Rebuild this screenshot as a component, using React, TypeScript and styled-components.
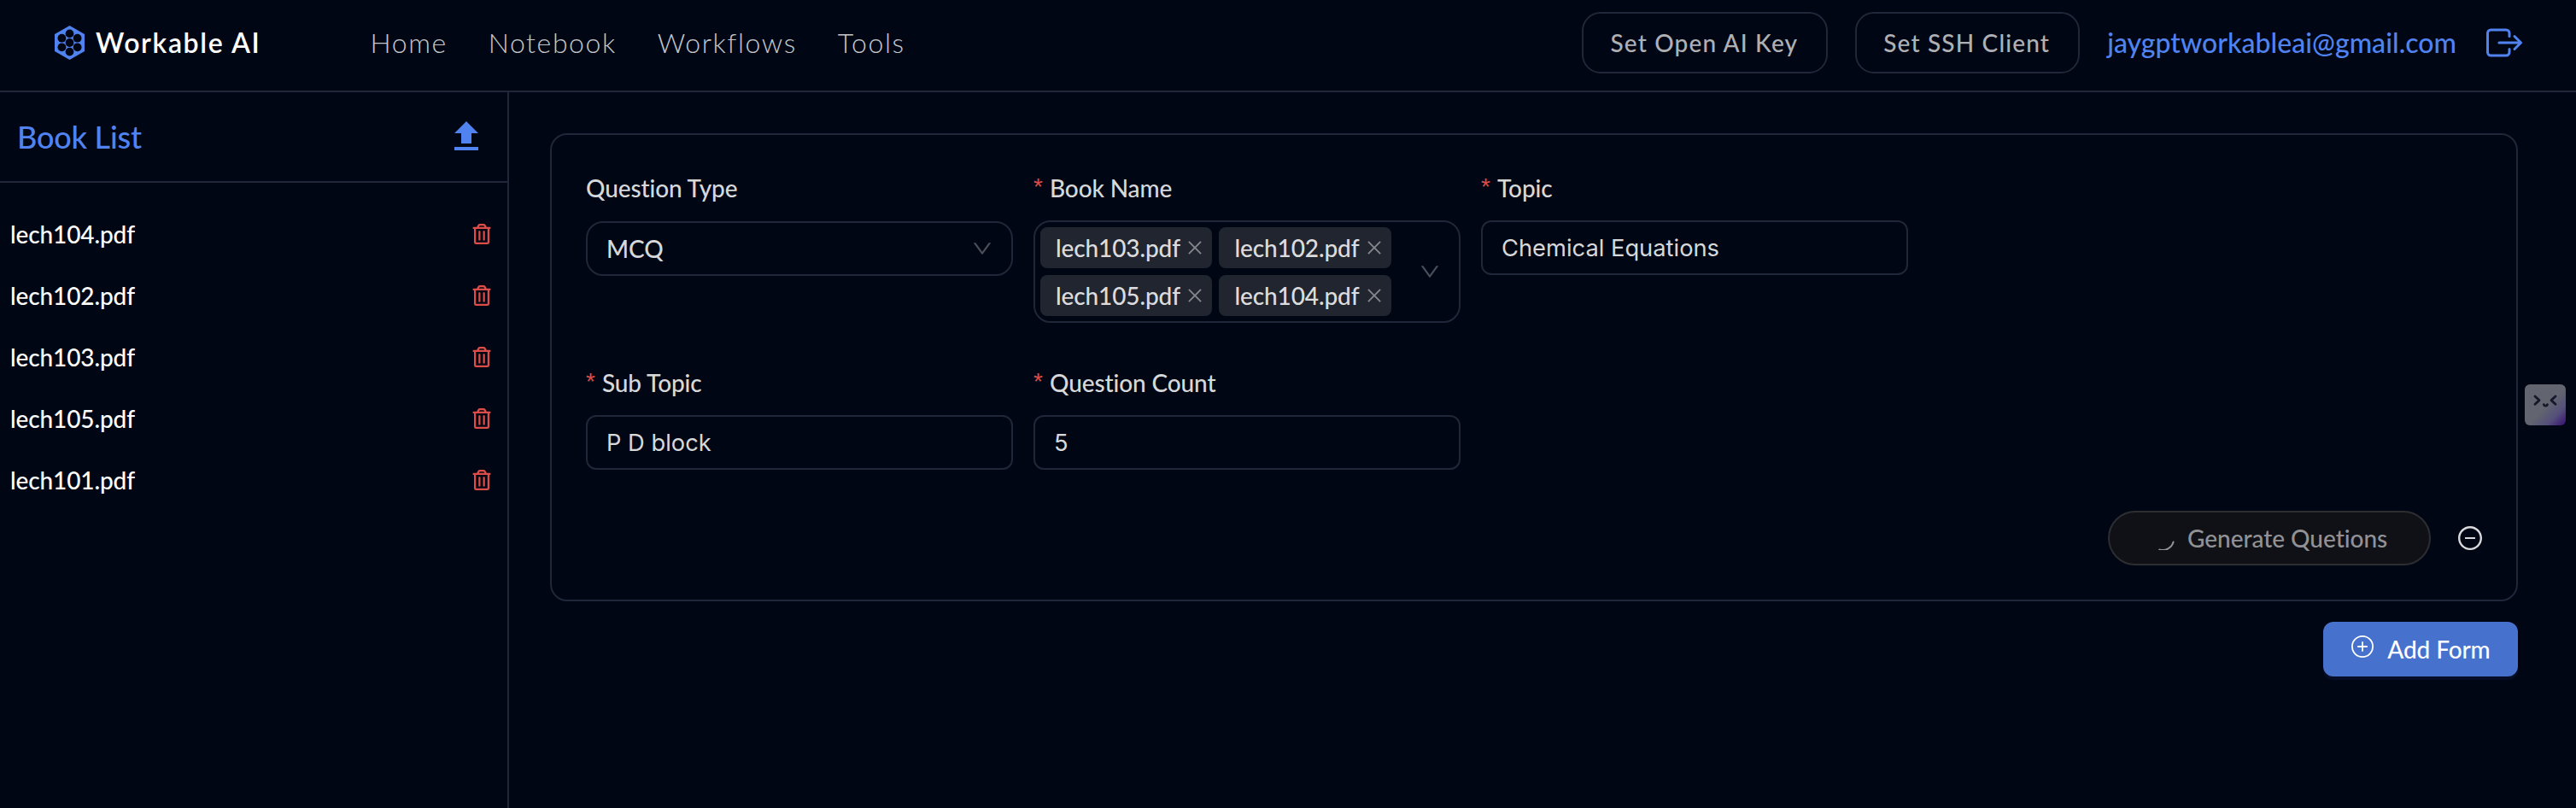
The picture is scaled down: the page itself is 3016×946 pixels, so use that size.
import React from "react";
import styled, { createGlobalStyle } from "styled-components";
import { AiOutlineClose, AiOutlineDown, AiOutlineMinusCircle } from "react-icons/ai";
import { FaRegTrashAlt } from "react-icons/fa";
import { IoExitOutline } from "react-icons/io5";
import { MdUpload } from "react-icons/md";

const color = {
  bg: "#010614",
  border: "#1f2738",
  accent: "#5083f0",
  danger: "#dc4c48",
  text: "rgba(255, 255, 255, 0.85)",
  muted: "#aeb0b4",
};

const GlobalStyle = createGlobalStyle`
  *, *::before, *::after { box-sizing: border-box; }
  body {
    margin: 0;
    background: ${color.bg};
    color: ${color.text};
    font-family: Lato, "Liberation Sans", sans-serif;
    font-size: 28px;
    font-weight: 500;
    font-variant-ligatures: none;
    letter-spacing: -0.12px;
    line-height: 44px;
  }
  button { font: inherit; font-variant-ligatures: none; letter-spacing: inherit; color: inherit; background: none; border: 0; padding: 0; margin: 0; }
  svg { display: block; flex: none; }
`;

const Page = styled.div`
  position: relative;
  display: flex;
  flex-direction: column;
  height: 946px;
  overflow: hidden;
`;

const Header = styled.header`
  display: flex;
  align-items: flex-start;
  height: 108px;
  padding: 14px 60px 0 64px;
  border-bottom: 2px solid ${color.border};
`;

const Brand = styled.div`
  display: flex;
  align-items: center;
  gap: 13px;
  width: 369.5px;
  height: 72px;
  font-size: 32px;
  font-weight: 600;
  letter-spacing: 1.65px;
  color: #fff;
`;

const Nav = styled.nav`
  display: flex;
  align-items: center;
  gap: 47.8px;
  height: 72px;
  font-size: 32px;
  font-weight: 300;
  letter-spacing: 1.6px;
  color: #c4c6c9;
`;

const Account = styled.div`
  display: flex;
  align-items: center;
  gap: 32px;
  height: 72px;
  margin-left: auto;
  color: ${color.accent};
`;

const KeyButton = styled.button`
  height: 72px;
  padding: 0 33px 0 31px;
  border: 2px solid ${color.border};
  border-radius: 22px;
  letter-spacing: 1.16px;
  color: ${color.muted};
`;

const Email = styled.span`
  font-size: 32px;
  letter-spacing: 0.03px;
`;

const Body = styled.div`
  display: flex;
  flex: 1;
`;

const Sidebar = styled.aside`
  width: 596px;
  border-right: 2px solid ${color.border};
`;

const SidebarHeader = styled.div`
  display: flex;
  align-items: center;
  justify-content: space-between;
  height: 106px;
  padding: 0 24px 0 20px;
  border-bottom: 2px solid ${color.border};
  font-size: 36px;
  letter-spacing: -0.22px;
  color: ${color.accent};
`;

const BookList = styled.ul`
  list-style: none;
  margin: 0;
  padding: 24px 0;
`;

const BookRow = styled.li`
  display: flex;
  align-items: center;
  justify-content: space-between;
  height: 72px;
  padding: 0 18px 0 12px;
  color: #fff;

  svg { color: ${color.danger}; }
`;

const Main = styled.main`
  display: flex;
  flex: 1;
  flex-direction: column;
  align-items: flex-end;
  gap: 24px;
  padding: 48px 68px 0 48px;
`;

const Card = styled.section`
  width: 100%;
  padding: 40px;
  border: 2px solid ${color.border};
  border-radius: 20px;
`;

const Fields = styled.div`
  display: grid;
  grid-template-columns: repeat(3, 500px);
  column-gap: 24px;
  row-gap: 48px;
  align-items: start;
`;

const Field = styled.div`
  display: flex;
  flex-direction: column;
  gap: 16px;
`;

const Label = styled.div`
  display: flex;
  height: 44px;
`;

const Required = styled.span`
  width: 19px;
  font-family: "Liberation Sans", sans-serif;
  line-height: 42px;
  color: ${color.danger};
`;

const Input = styled.div`
  height: 64px;
  padding: 0 22px;
  border: 2px solid ${color.border};
  border-radius: 12px;
  font-family: Inter, "Liberation Sans", sans-serif;
  font-size: 27.3px;
  font-weight: 400;
  letter-spacing: 0;
  line-height: 61px;
`;

const Select = styled.div<{ $multiple?: boolean }>`
  display: flex;
  align-items: center;
  justify-content: space-between;
  height: ${(p) => (p.$multiple ? "120px" : "64px")};
  margin-top: ${(p) => (p.$multiple ? "0" : "1px")};
  padding: ${(p) => (p.$multiple ? "0 22px 0 6px" : "0 22px")};
  border: 2px solid ${color.border};
  border-radius: 20px;

  > svg { color: #4b4e58; }
`;

const Tags = styled.div`
  display: flex;
  flex-wrap: wrap;
  gap: 8px;
  width: 420px;
`;

const Tag = styled.span`
  display: flex;
  align-items: center;
  gap: 7.5px;
  height: 48px;
  padding: 0 10px 0 18px;
  border-radius: 8px;
  background: #212530;

  svg { color: #85878c; }
`;

const Actions = styled.div`
  display: flex;
  align-items: center;
  justify-content: flex-end;
  gap: 32px;
  margin-top: 48px;
`;

const GenerateButton = styled.button`
  display: flex;
  align-items: center;
  gap: 15px;
  width: 378px;
  height: 64px;
  padding: 0 48px;
  border: 2px solid #2d2e32;
  border-radius: 32px;
  background: #101116;
  color: #919295;
  letter-spacing: -0.03px;
  white-space: nowrap;
`;

const AddButton = styled.button`
  display: flex;
  align-items: center;
  justify-content: center;
  gap: 15px;
  width: 228px;
  height: 64px;
  border-radius: 12px;
  background: #4671cd;
  box-shadow: 0 4px 0 #060d27;
  color: #fff;

  svg { margin-bottom: 6px; }
`;

const Assistant = styled.div`
  position: absolute;
  top: 450px;
  right: 12px;
  width: 48px;
  height: 48px;
  border-radius: 6px;
  background: linear-gradient(135deg, #62656f 0%, #62656f 52%, #55507a 76%, #3f1f74 94%);
`;

const holes = [
  [17.5, 20], [17.5, 9.4], [17.5, 30.6],
  [8.4, 14.7], [8.4, 25.3], [26.6, 14.7], [26.6, 25.3],
];

const Logo = () => (
  <svg width="35" height="40" viewBox="0 0 35 40">
    <path d="M17.5 0 35 10v20L17.5 40 0 30V10z" fill={color.accent} />
    {holes.map(([cx, cy]) => (
      <circle key={`${cx}-${cy}`} cx={cx} cy={cy} r="4.9" fill={color.bg} />
    ))}
  </svg>
);

const Spinner = () => (
  <svg width="28" height="28" viewBox="0 0 28 28" fill="none" stroke="currentColor" strokeWidth="2" strokeLinecap="round">
    <path d="M10.3 27.4A13 13 0 0 0 26.6 18.4" />
  </svg>
);

const PlusCircle = () => (
  <svg width="28" height="28" viewBox="0 0 28 28" fill="none" stroke="currentColor" strokeWidth="1.8">
    <circle cx="14" cy="14" r="12.1" />
    <path d="M8.2 14h11.6M14 8.2v11.6" />
  </svg>
);

const Face = () => (
  <svg width="48" height="48" viewBox="0 0 48 48" fill="none" stroke="#15182b" strokeWidth="2.8" strokeLinecap="round" strokeLinejoin="round">
    <path d="M12 14l5 4.6-5 4.6M36 14l-5 4.6 5 4.6M22.3 23.6c.6 2 3.6 2 4.2 0" />
  </svg>
);

const antBox = "64 64 896 896";
const books = ["lech104.pdf", "lech102.pdf", "lech103.pdf", "lech105.pdf", "lech101.pdf"];
const selected = ["lech103.pdf", "lech102.pdf", "lech105.pdf", "lech104.pdf"];

const FormField = ({ label, required = true, children }: { label: string; required?: boolean; children: React.ReactNode }) => (
  <Field>
    <Label>
      {required && <Required>*</Required>}
      {label}
    </Label>
    {children}
  </Field>
);

export default function App() {
  return (
    <Page>
      <GlobalStyle />
      <Header>
        <Brand>
          <Logo />
          Workable AI
        </Brand>
        <Nav>
          <span>Home</span>
          <span>Notebook</span>
          <span>Workflows</span>
          <span>Tools</span>
        </Nav>
        <Account>
          <KeyButton>Set Open AI Key</KeyButton>
          <KeyButton>Set SSH Client</KeyButton>
          <Email>jaygptworkableai@gmail.com</Email>
          <IoExitOutline size={48} />
        </Account>
      </Header>
      <Body>
        <Sidebar>
          <SidebarHeader>
            Book List
            <MdUpload size={48} />
          </SidebarHeader>
          <BookList>
            {books.map((name) => (
              <BookRow key={name}>
                {name}
                <FaRegTrashAlt size={24} />
              </BookRow>
            ))}
          </BookList>
        </Sidebar>
        <Main>
          <Card>
            <Fields>
              <FormField label="Question Type" required={false}>
                <Select>
                  MCQ
                  <AiOutlineDown size={24} viewBox={antBox} />
                </Select>
              </FormField>
              <FormField label="Book Name">
                <Select $multiple>
                  <Tags>
                    {selected.map((name) => (
                      <Tag key={name}>
                        {name}
                        <AiOutlineClose size={20} viewBox={antBox} />
                      </Tag>
                    ))}
                  </Tags>
                  <AiOutlineDown size={24} viewBox={antBox} />
                </Select>
              </FormField>
              <FormField label="Topic">
                <Input>Chemical Equations</Input>
              </FormField>
              <FormField label="Sub Topic">
                <Input>P D block</Input>
              </FormField>
              <FormField label="Question Count">
                <Input>5</Input>
              </FormField>
            </Fields>
            <Actions>
              <GenerateButton>
                <Spinner />
                Generate Quetions
              </GenerateButton>
              <AiOutlineMinusCircle size={28} viewBox={antBox} />
            </Actions>
          </Card>
          <AddButton>
            <PlusCircle />
            Add Form
          </AddButton>
        </Main>
      </Body>
      <Assistant>
        <Face />
      </Assistant>
    </Page>
  );
}
